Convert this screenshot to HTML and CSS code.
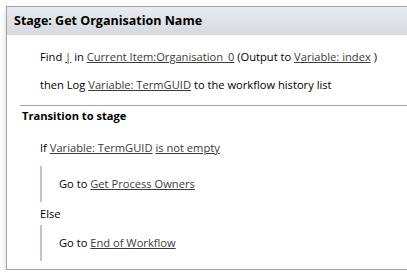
FILE: index.html
```html
<!DOCTYPE html>
<html lang="en">
<head>
    <meta charset="UTF-8">
    <title>Workflow Stage</title>
    <link rel="stylesheet" href="styles.css">
</head>
<body>
    <div class="stage">
        <div class="stage__header">Stage: Get Organisation Name</div>

        <div class="stage__actions">
            <div class="line">Find <a class="link">|</a> in <a class="link">Current Item:Organisation_0</a> (Output to <a class="link">Variable: index</a> )</div>
            <div class="line">then Log <a class="link">Variable: TermGUID</a> to the workflow history list</div>
        </div>

        <div class="transition">
            <div class="transition__title">Transition to stage</div>
            <div class="transition__body">
                <div class="line">If <a class="link">Variable: TermGUID</a> <a class="link">is not empty</a></div>
                <div class="branch branch--first">
                    <div class="line">Go to <a class="link">Get Process Owners</a></div>
                </div>
                <div class="line line--else">Else</div>
                <div class="branch">
                    <div class="line">Go to <a class="link">End of Workflow</a></div>
                </div>
            </div>
        </div>
    </div>
</body>
</html>
```

FILE: styles.css
```css
* {
    margin: 0;
    padding: 0;
    box-sizing: border-box;
}

body {
    background-color: #ffffff;
    font-family: "Open Sans", "Noto Sans", sans-serif;
    font-size: 11.15px;
    color: #000;
    overflow: hidden;
}

.stage {
    margin: 6px 0 0 6px;
    width: calc(100vw - 6px);
    border: 1px solid #a3a3a3;
    border-right: none;
    background-color: #fff;
    box-shadow: 0 3px 6px rgba(0, 0, 0, 0.18);
    padding-bottom: 8px;
}

.stage__header {
    height: 28px;
    line-height: 28px;
    padding-left: 7px;
    font-size: 12.5px;
    font-weight: bold;
    background: linear-gradient(#e8ebef, #d6dae0);
}

.stage__actions {
    padding: 8px 0 6px 33px;
}

.line {
    line-height: 28px;
    white-space: nowrap;
}

.link {
    color: #3b3b3b;
    text-decoration: underline;
}

.transition {
    margin-left: 13px;
    border-top: 1px solid #a3a3a3;
}

.transition__title {
    line-height: 20px;
    padding-left: 2px;
    font-weight: bold;
}

.transition__body {
    padding: 8px 0 0 20px;
}

.branch {
    border-left: 2px solid #c4c2d6;
    padding: 4px 0 4px 17px;
}

.branch--first {
    margin-top: 4px;
}

.line--else {
    line-height: 23px;
}
```
